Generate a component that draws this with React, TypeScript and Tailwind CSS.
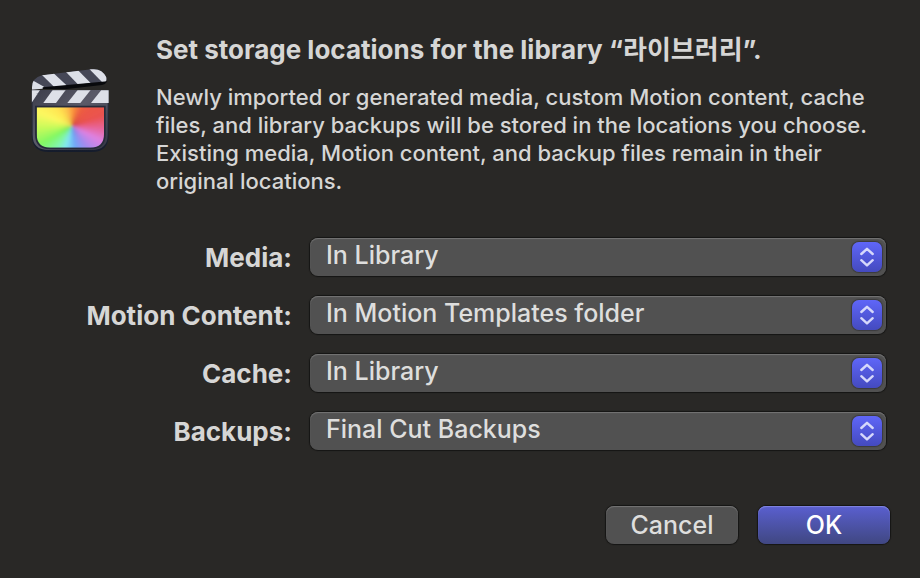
import { useState } from 'react';

const locations = [
  { id: 'media', label: 'Media:', options: ['In Library', 'Choose…'] },
  { id: 'motion', label: 'Motion Content:', options: ['In Motion Templates folder', 'In Library'] },
  { id: 'cache', label: 'Cache:', options: ['In Library', 'Choose…'] },
  { id: 'backups', label: 'Backups:', options: ['Final Cut Backups', 'Do Not Save'] },
];

// colour wheel stops: [degrees clockwise from the top, r, g, b]
const stops = [
  [0, 250, 150, 60],
  [30, 236, 92, 66],
  [70, 234, 82, 80],
  [92, 232, 100, 150],
  [115, 222, 130, 226],
  [145, 160, 140, 240],
  [170, 112, 168, 246],
  [195, 130, 232, 240],
  [215, 130, 246, 170],
  [238, 130, 248, 100],
  [265, 200, 250, 90],
  [290, 252, 248, 96],
  [320, 255, 226, 80],
  [345, 253, 190, 76],
  [360, 250, 150, 60],
];

function wheelColor(deg: number) {
  const i = stops.findIndex((s) => s[0] > deg);
  const a = stops[i - 1];
  const b = stops[i];
  const t = (deg - a[0]) / (b[0] - a[0]);
  const mix = (n: number) => Math.round(a[n] + (b[n] - a[n]) * t);
  return `rgb(${mix(1)},${mix(2)},${mix(3)})`;
}

function wedge(deg: number) {
  const point = (d: number) => {
    const r = (d * Math.PI) / 180;
    return `${(156 + 150 * Math.sin(r)).toFixed(1)},${(198 - 150 * Math.cos(r)).toFixed(1)}`;
  };
  return `156,198 ${point(deg)} ${point(deg + 6)}`;
}

function ClapperIcon() {
  const degrees = Array.from({ length: 120 }, (_, i) => i * 3);
  return (
    <svg viewBox="33 24 234 255" className="h-[85px] w-[78px] shrink-0" aria-hidden="true">
      <defs>
        <clipPath id="wheel">
          <path d="M50 142H252V222Q252 263 211 263H91Q50 263 50 222Z" />
        </clipPath>
        <clipPath id="arm">
          <path d="M36 82Q36 54 66 46L214 28Q246 24 259 52Q262 64 254 67L36 89Z" />
        </clipPath>
        <clipPath id="strip">
          <path d="M35 91H266V129H35Z" />
        </clipPath>
        <filter id="soft">
          <feGaussianBlur stdDeviation="4" />
        </filter>
        <linearGradient id="body" x1="0" y1="0" x2="1" y2="1">
          <stop offset="0" stopColor="#3b3d4b" />
          <stop offset="0.45" stopColor="#5a5a68" />
          <stop offset="1" stopColor="#343644" />
        </linearGradient>
        <linearGradient id="edge" x1="0" y1="0" x2="0" y2="1">
          <stop offset="0" stopColor="#2c303e" />
          <stop offset="1" stopColor="#151c2c" />
        </linearGradient>
      </defs>
      <path d="M35 90H266V226Q266 276 216 276H85Q35 276 35 226Z" fill="url(#edge)" />
      <path d="M38 90H263V225Q263 270 215 270H86Q38 270 38 225Z" fill="url(#body)" />
      <path d="M45 137H257V223Q257 268 212 268H90Q45 268 45 223Z" fill="#262b3a" />
      <g clipPath="url(#wheel)">
        <g filter="url(#soft)">
          {degrees.map((d) => (
            <polygon key={d} points={wedge(d)} fill={wheelColor(d)} />
          ))}
        </g>
      </g>
      <g clipPath="url(#strip)" fill="#dde0e8">
        <path d="M35 90H60L35 128Z" />
        <path d="M98 90H137L108 129H70Z" />
        <path d="M173 90H212L181 129H142Z" />
        <path d="M244 90H268V129H213Z" />
      </g>
      <g clipPath="url(#arm)">
        <path d="M30 20H270V95H30Z" fill="#454756" />
        <path d="M36 60L72 80L70 90H30Z" fill="#dde0e8" />
        <path d="M66 45L100 39L142 78L105 83Z" fill="#dde0e8" />
        <path d="M138 36L174 31L212 69L175 74Z" fill="#dde0e8" />
        <path d="M208 27L240 22L265 55L262 66L246 66Z" fill="#dde0e8" />
      </g>
      <path d="M68 82L262 64Q258 72 246 75L140 87H68Z" fill="#08090c" />
      <circle cx="52" cy="101" r="2" fill="#8c8f9c" />
    </svg>
  );
}

function Chevrons() {
  return (
    <span className="pointer-events-none absolute top-1 right-1 flex size-[30px] items-center justify-center rounded-[7px] bg-linear-to-b from-[#5f66f8] to-[#444abf] shadow-[0_0_1px_1px_#3a3a3c]">
      <svg viewBox="0 0 30 30" className="size-[30px]" fill="none" stroke="#d6d8fb" strokeWidth="2.4" strokeLinecap="round" strokeLinejoin="round">
        <path d="M9.300 12L15 6.800L20.700 12M9.300 18.200L15 23.400L20.700 18.200" />
      </svg>
    </span>
  );
}

export default function App() {
  const [values, setValues] = useState<Record<string, string>>({});

  return (
    <main className="min-h-screen bg-[#292826] pt-9 pr-[30px] pb-8 pl-[31px] font-[Inter,'Noto_Sans_CJK_KR',sans-serif] text-[#d6d6d5]">
      <header className="flex items-start gap-[47px]">
        <div className="pt-8">
          <ClapperIcon />
        </div>
        <div>
          <h1 className="text-[26px] leading-7 font-bold">Set storage locations for the library “라이브러리”.</h1>
          <p className="mt-[19px] max-w-[720px] text-[22px] leading-7 font-medium">
            Newly imported or generated media, custom Motion content, cache files, and library backups will be stored in the locations you choose. Existing media, Motion content, and backup files remain in their original locations.
          </p>
        </div>
      </header>

      <form onSubmit={(e) => e.preventDefault()}>
        <div className="mt-[43px] flex flex-col gap-5 pr-1">
          {locations.map(({ id, label, options }) => (
            <div key={id} className="flex items-center gap-[18px]">
              <label htmlFor={id} className="w-[261px] shrink-0 pt-0.5 text-right text-[26px] leading-9 font-bold whitespace-nowrap">
                {label}
              </label>
              <div className="relative h-[38px] flex-1">
                <select
                  id={id}
                  value={values[id] ?? options[0]}
                  onChange={(e) => setValues({ ...values, [id]: e.target.value })}
                  className="h-full w-full appearance-none rounded-lg bg-[#515151] pr-12 pb-1 pl-4 text-[25px] leading-8 font-medium text-[#dededd] shadow-[inset_0_1px_1px_#757575,0_0_1px_1px_#151514]"
                >
                  {options.map((option) => (
                    <option key={option}>{option}</option>
                  ))}
                </select>
                <Chevrons />
              </div>
            </div>
          ))}
        </div>

        <div className="mt-14 flex justify-end gap-5">
          <button type="button" className="h-[38px] w-[132px] rounded-lg bg-[#515151] text-[25px] leading-8 font-medium text-[#dededd] shadow-[inset_0_1px_1px_#757575,0_0_1px_1px_#151514]">
            Cancel
          </button>
          <button type="submit" className="h-[38px] w-[132px] rounded-lg bg-linear-to-b from-[#5a5fd0] to-[#404782] text-[25px] leading-8 font-medium text-white shadow-[inset_0_1px_1px_#8186e0,0_0_1px_1px_#151514]">
            OK
          </button>
        </div>
      </form>
    </main>
  );
}
